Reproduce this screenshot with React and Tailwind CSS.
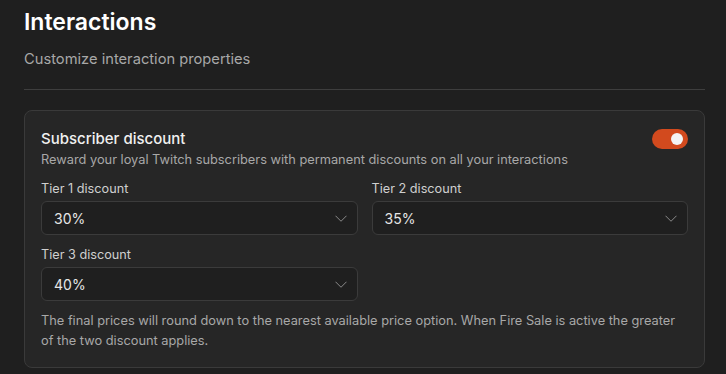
import React from "react";

function Select({ value }) {
    return (
        <div className="h-[34px] flex items-center justify-between pl-[12px] pr-[10px] rounded-md border border-[#3b3b3b] bg-[#1f1f1f] text-[14px] text-[#e6e6e6]">
            <span>{value}</span>
            <svg width="12" height="7" viewBox="0 0 12 7" fill="none" stroke="#8a8a8a" strokeWidth="1">
                <path d="M0.5 0.75l5.5 5.5 5.5-5.5" />
            </svg>
        </div>
    );
}

function Field({ label, value }) {
    return (
        <div className="flex flex-col">
            <div className="text-[12.7px] text-[#cfcfcf] leading-[18px] mb-[3px]">{label}</div>
            <Select value={value} />
        </div>
    );
}

export default function App() {
    return (
        <div
            className="w-[726px] h-[374px] bg-[#1f1f1f] pl-6 pr-[21px] pt-[6px] overflow-hidden"
            style={{ fontFamily: "Inter, 'Noto Sans', sans-serif" }}
        >
            <h1 className="text-[23px] font-semibold text-white leading-[32px]">Interactions</h1>
            <p className="mt-[11px] text-[14.7px] text-[#a8a8a8] leading-[20px]">Customize interaction properties</p>
            <div className="mt-[20px] h-px bg-[#3e3e3e]" />
            <div className="mt-[20px] rounded-lg border border-[#3a3a3a] bg-[#262626] px-4 pt-[17px] pb-[16px]">
                <div className="flex items-start justify-between">
                    <div>
                        <div className="text-[15px] font-medium text-[#f0f0f0] leading-[22px]">Subscriber discount</div>
                        <div className="text-[12.8px] text-[#a8a8a8] leading-[20px]">
                            Reward your loyal Twitch subscribers with permanent discounts on all your interactions
                        </div>
                    </div>
                    <div className="mt-[1px] w-[36px] h-[20px] rounded-full bg-[#d24a1e] flex items-center justify-end pr-[5px]">
                        <div className="w-[12px] h-[12px] rounded-full bg-[#f4f4f4]" />
                    </div>
                </div>
                <div className="mt-[10px] grid grid-cols-2 gap-x-[14px] gap-y-[11px]">
                    <Field label="Tier 1 discount" value="30%" />
                    <Field label="Tier 2 discount" value="35%" />
                    <Field label="Tier 3 discount" value="40%" />
                </div>
                <p className="mt-[10px] pr-[6px] text-[12.8px] text-[#a8a8a8] leading-[20px]">
                    The final prices will round down to the nearest available price option. When Fire Sale is active the greater of the two discount applies.
                </p>
            </div>
        </div>
    );
}
